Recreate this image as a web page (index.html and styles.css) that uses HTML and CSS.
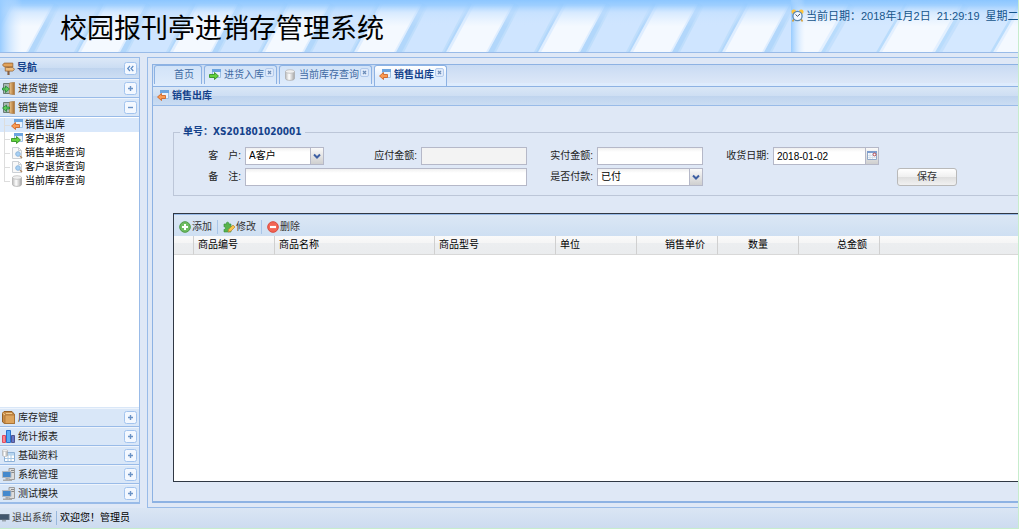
FILE: index.html
```html
<!DOCTYPE html>
<html lang="zh-CN">
<head>
<meta charset="utf-8">
<title>校园报刊亭进销存管理系统</title>
<link rel="stylesheet" href="styles.css">
</head>
<body>
<svg class="sprite" aria-hidden="true">
  <defs>
    <linearGradient id="g-top" x1="0" y1="0" x2="0" y2="1">
      <stop offset="0" stop-color="#8cc6ff" stop-opacity="1"/><stop offset=".1" stop-color="#98ccff" stop-opacity=".9"/>
      <stop offset=".24" stop-color="#c0deff" stop-opacity=".55"/><stop offset=".5" stop-color="#d0e6ff" stop-opacity="0"/>
    </linearGradient>
    <linearGradient id="g-left"><stop offset="0" stop-color="#98ccff"/><stop offset="1" stop-color="#d4e8ff" stop-opacity="0"/></linearGradient>
    <linearGradient id="g-wood"><stop offset="0" stop-color="#ecc58b"/><stop offset="1" stop-color="#a66b2c"/></linearGradient>
    <linearGradient id="g-db"><stop offset="0" stop-color="#bbb"/><stop offset=".4" stop-color="#fff"/><stop offset="1" stop-color="#a5a5a5"/></linearGradient>
    <pattern id="stripes" width="92" height="53" patternUnits="userSpaceOnUse" x="8">
      <rect width="92" height="53" fill="#cfe5ff"/>
      <path d="M4 4L-22 54M96 4L70 54M48 4L22 54" stroke="#bfdefc" stroke-width="9"/>
      <path d="M4 4L-22 54M96 4L70 54M48 4L22 54" stroke="#b2d7fb" stroke-width="5"/>
      <path d="M4 4H46L19 54H-23ZM96 4H138L111 54H69Z" fill="#dfeeff"/>
      <path d="M7 4H44L17 54H-20ZM99 4H136L109 54H72Z" fill="#f4f9ff"/>
    </pattern>
    <pattern id="stripes-wide" width="114" height="53" patternUnits="userSpaceOnUse">
      <rect width="114" height="53" fill="#d4e8ff"/>
      <path d="M60 4L31 54" stroke="#c4e0fd" stroke-width="9"/>
      <path d="M59 4L30 54M2 4L-27 54M116 4L87 54" stroke="#b9dcfc" stroke-width="5"/>
      <path d="M2 4H58L29 54H-27ZM116 4H172L143 54H87Z" fill="#e3f0ff"/>
      <path d="M5 4H55L26 54H-24ZM119 4H169L140 54H90Z" fill="#f4f9ff"/>
    </pattern>
  </defs>
  <symbol id="i-out" viewBox="0 0 12 12"><path d="M3.500.500h8v8h-8z" fill="#e8f2fc" stroke="#9dc0e6"/><path d="M3 0h9v3H3z" fill="#6da5df"/><path d="M.5 7L4.500 3.500v2h4v3h-4v2z" fill="#fb9b52" stroke="#cc5c1c" stroke-width=".8"/></symbol>
  <symbol id="i-in" viewBox="0 0 12 12"><path d="M3.500.500h8v8h-8z" fill="#e8f2fc" stroke="#9dc0e6"/><path d="M3 0h9v3H3z" fill="#6da5df"/><path d="M9.500 7L5.500 3.500v2H.5v3h5v2z" fill="#63d13c" stroke="#298a18" stroke-width=".8"/></symbol>
  <symbol id="i-find" viewBox="0 0 12 12"><path d="M1.500.500h6l3 3v8h-9z" fill="#f8f8f8" stroke="#ccd0d5"/><path d="M7.500.500v3h3" fill="none" stroke="#ccd0d5"/><circle cx="7" cy="7" r="2.300" fill="#a8d0f3" stroke="#8fb8de"/><path d="M9 9l2 2" stroke="#b28a65" stroke-width="1.500"/></symbol>
  <symbol id="i-db" viewBox="0 0 12 12"><path d="M1.500 2.500v7c0 2.500 9 2.500 9 0v-7z" fill="url(#g-db)" stroke="#aaa" stroke-width=".7"/><ellipse cx="6" cy="2.500" rx="4.500" ry="1.800" fill="#f0f0f0" stroke="#b5b5b5" stroke-width=".7"/></symbol>
  <symbol id="i-sign" viewBox="0 0 12 12"><path d="M5 1h2v11H5z" fill="#866043"/><path d="M2 1h8v3.500H2L.5 2.750z" fill="#e1a35c" stroke="#94602f" stroke-width=".7"/><path d="M3 5h7l1.500 1.700L10 8.400H3z" fill="#efbd7c" stroke="#94602f" stroke-width=".7"/></symbol>
  <symbol id="i-door" viewBox="0 0 13 13"><path d="M1.500 1.500h7v10h-7z" fill="#a9b8b3" stroke="#6b7c76"/><path d="M7.500 1l5-.8v12.600L7.500 12z" fill="url(#g-wood)" stroke="#a3743e" stroke-width=".6"/><path d="M.5 6h3V4l4 3-4 3.500V8h-3z" fill="#5dcc5a" stroke="#187e2d" stroke-width=".7"/></symbol>
  <symbol id="i-door-out" viewBox="0 0 13 13"><path d="M1.500 1.500h7v10h-7z" fill="#a9b8b3" stroke="#6b7c76"/><path d="M7.500 1l5-.8v12.600L7.500 12z" fill="url(#g-wood)" stroke="#a3743e" stroke-width=".6"/><path d="M7.500 6h-3V4l-4 3 4 3.500V8h3z" fill="#5dcc5a" stroke="#187e2d" stroke-width=".7"/></symbol>
  <symbol id="i-box" viewBox="0 0 13 13"><path d="M.5 2L2 .5h8l2.500 3v9h-10l-2-1.500z" fill="#c98e4b" stroke="#956026"/><path d="M3 4h9.500v8.500H3z" fill="#dda45d" stroke="#a36e31" stroke-width=".7"/><path d="M.5 2L3 4M4 2.500h6" fill="none" stroke="#f1ca8d"/></symbol>
  <symbol id="i-chart" viewBox="0 0 13 13"><path d="M.5 5.500h3v7h-3z" fill="#f88890" stroke="#de4c60"/><path d="M4.500.500h4v12h-4z" fill="#5aaaf4" stroke="#2870cf"/><path d="M9.500 5.500h3v7h-3z" fill="#6476c9" stroke="#52558f"/></symbol>
  <symbol id="i-table" viewBox="0 0 13 13"><path d="M2.500 3.500h10v9h-10z" fill="#fff" stroke="#8db1d7"/><path d="M3 4h9v2.500H3z" fill="#b5d4ef"/><path d="M3 9.500h9M6 6v6M9 6v6" stroke="#a9c8e4"/><path d="M.5 1.500v5c0 1.400 5 1.400 5 0v-5z" fill="url(#g-db)" stroke="#aaa" stroke-width=".5"/><ellipse cx="3" cy="1.500" rx="2.500" ry="1.100" fill="#eee" stroke="#bbb" stroke-width=".5"/></symbol>
  <symbol id="i-pc" viewBox="0 0 13 13"><path d="M7 .500h5.500v11H7z" fill="#ddd" stroke="#9c9c9c"/><path d="M9 2.500h3M9 4.500h3" stroke="#888"/><path d="M.5 3.500h8.500v6H.5z" fill="#4489cd" stroke="#b4b8be"/><path d="M3.500 10h3v1.500H10V13H1v-1.500h2.500z" fill="#aaa"/></symbol>
  <symbol id="i-clock" viewBox="0 0 13 13"><circle cx="2.800" cy="2.800" r="2.400" fill="#ffc43b"/><circle cx="10.200" cy="2.800" r="2.400" fill="#ffc43b"/><path d="M3 10l-1.500 2.500M10 10l1.500 2.500" stroke="#d6a03c" stroke-width="1.500"/><circle cx="6.500" cy="7" r="4.600" fill="#f2f8ff" stroke="#5a86af" stroke-width="1.300"/><path d="M4.500 5.500l2 1.800L9 5" fill="none" stroke="#456"/></symbol>
  <symbol id="i-add" viewBox="0 0 12 12"><circle cx="6" cy="6" r="5.300" fill="#6fbd62" stroke="#4d9a45"/><path d="M6 3v6M3 6h6" stroke="#fff" stroke-width="2"/></symbol>
  <symbol id="i-del" viewBox="0 0 12 12"><circle cx="6" cy="6" r="5.300" fill="#f36555" stroke="#d8493d"/><path d="M3 6h6" stroke="#fff" stroke-width="2.200"/></symbol>
  <symbol id="i-edit" viewBox="0 0 12 12"><path d="M1 3h2.500C2.500.500 6.500.500 5.800 3H8v2.500c2.500-1 2.500 3 0 2.200V11H1V8.300c2 .7 2-3 0-2.400z" fill="#59b34d" stroke="#338e35" stroke-width=".6"/><path d="M5 11l.8-2.800L10 4l2 2-4.200 4.200z" fill="#f8c64e" stroke="#b88434" stroke-width=".7"/></symbol>
  <symbol id="i-cal" viewBox="0 0 12 16"><path d="M1.500 3.500h9v8h-9z" fill="#f7fbff" stroke="#90a8c8"/><path d="M1 3h10v2H1z" fill="#7d9dce"/><path d="M2 7.500h5M2 9.500h8M4 5v6M6.500 5v6" stroke="#d3deea" stroke-width=".8"/><circle cx="8.500" cy="6.500" r="1.400" fill="#fff" stroke="#b04049"/></symbol>
  <symbol id="i-mon" viewBox="0 0 10 10"><path d="M0 1h9.500v6H0z" fill="#5a6b7d"/><path d="M0 2h8.500v4H0z" fill="#41566d"/><path d="M2 7h4v1.500H2z" fill="#9aa4ae"/></symbol>
  <symbol id="i-plus" viewBox="0 0 13 13"><rect x=".5" y=".5" width="12" height="12" rx="2" fill="#f3f8ff" stroke="#a3c4ee"/><path d="M6.500 4v5M4 6.500h5" stroke="#6b93c6" stroke-width="1.400"/></symbol>
  <symbol id="i-minus" viewBox="0 0 13 13"><rect x=".5" y=".5" width="12" height="12" rx="2" fill="#f3f8ff" stroke="#a3c4ee"/><path d="M4 6.500h5" stroke="#6b93c6" stroke-width="1.400"/></symbol>
  <symbol id="i-fold" viewBox="0 0 13 13"><rect x=".5" y=".5" width="12" height="12" rx="2" fill="#f3f8ff" stroke="#a3c4ee"/><path d="M6 4L3.700 6.500 6 9M9.300 4L7 6.500 9.300 9" fill="none" stroke="#5e8cc5" stroke-width="1.200"/></symbol>
  <symbol id="i-close" viewBox="0 0 9 9"><rect x=".5" y=".5" width="8" height="8" rx="1.500" fill="#dfeafa" stroke="#b2caec"/><path d="M3 3l3 3M6 3L3 6" stroke="#6c8cb8" stroke-width="1.300"/></symbol>
  <symbol id="i-arrow" viewBox="0 0 12 16"><path d="M3 6.500L6 9.500 9 6.500" fill="none" stroke="#3e5fa3" stroke-width="2"/></symbol>
</svg>

<div class="app">
  <header class="banner">
    <div class="brand">
      <svg class="banner-bg" aria-hidden="true"><rect width="100%" height="53" fill="url(#stripes)"/><rect width="100%" height="53" fill="url(#g-top)"/><rect width="22" height="53" fill="url(#g-left)"/></svg>
      <h1>校园报刊亭进销存管理系统</h1>
    </div>
    <div class="clock">
      <svg class="banner-bg" aria-hidden="true"><rect width="100%" height="53" fill="url(#stripes-wide)"/><rect width="100%" height="53" fill="url(#g-top)"/><rect width="14" height="53" fill="url(#g-left)"/></svg>
      <svg class="icon13"><use href="#i-clock"/></svg>
      <div class="now"><span>当前日期：2018年1月2日</span><span>21:29:19</span><span>星期二</span></div>
    </div>
  </header>

  <div class="body">
    <nav class="side" aria-label="导航">
      <div class="side-title"><svg class="icon13"><use href="#i-sign"/></svg><h2>导航</h2><button class="tool" aria-label="折叠"><svg class="icon13"><use href="#i-fold"/></svg></button></div>
      <button class="acc"><svg class="icon13"><use href="#i-door"/></svg><span>进货管理</span><svg class="tool"><use href="#i-plus"/></svg></button>
      <button class="acc"><svg class="icon13"><use href="#i-door-out"/></svg><span>销售管理</span><svg class="tool"><use href="#i-minus"/></svg></button>
      <ul class="tree">
        <li class="active"><a href="#"><svg class="icon12"><use href="#i-out"/></svg>销售出库</a></li>
        <li><a href="#"><svg class="icon12"><use href="#i-in"/></svg>客户退货</a></li>
        <li><a href="#"><svg class="icon12"><use href="#i-find"/></svg>销售单据查询</a></li>
        <li><a href="#"><svg class="icon12"><use href="#i-find"/></svg>客户退货查询</a></li>
        <li><a href="#"><svg class="icon12"><use href="#i-db"/></svg>当前库存查询</a></li>
      </ul>
      <button class="acc"><svg class="icon13"><use href="#i-box"/></svg><span>库存管理</span><svg class="tool"><use href="#i-plus"/></svg></button>
      <button class="acc"><svg class="icon13"><use href="#i-chart"/></svg><span>统计报表</span><svg class="tool"><use href="#i-plus"/></svg></button>
      <button class="acc"><svg class="icon13"><use href="#i-table"/></svg><span>基础资料</span><svg class="tool"><use href="#i-plus"/></svg></button>
      <button class="acc"><svg class="icon13"><use href="#i-pc"/></svg><span>系统管理</span><svg class="tool"><use href="#i-plus"/></svg></button>
      <button class="acc"><svg class="icon13"><use href="#i-pc"/></svg><span>测试模块</span><svg class="tool"><use href="#i-plus"/></svg></button>
    </nav>

    <main class="center">
      <div class="tabpanel">
        <div class="tabs">
          <button class="tab home">首页</button>
          <button class="tab"><svg class="icon12"><use href="#i-in"/></svg><span>进货入库</span><svg class="close"><use href="#i-close"/></svg></button>
          <button class="tab"><svg class="icon12"><use href="#i-db"/></svg><span>当前库存查询</span><svg class="close"><use href="#i-close"/></svg></button>
          <button class="tab on"><svg class="icon12"><use href="#i-out"/></svg><span>销售出库</span><svg class="close"><use href="#i-close"/></svg></button>
        </div>
        <div class="panel-title"><svg class="icon12"><use href="#i-out"/></svg><h2>销售出库</h2></div>
        <div class="content">
          <fieldset class="order">
            <legend>单号：XS201801020001</legend>
            <div class="fields">
              <label for="customer">客　户:</label>
              <span class="combo short"><select id="customer"><option>A客户</option></select><svg class="trigger"><use href="#i-arrow"/></svg></span>
              <label for="due">应付金额:</label>
              <input id="due" class="disabled" type="text" readonly>
              <label for="paid">实付金额:</label>
              <input id="paid" type="text">
              <label for="date">收货日期:</label>
              <span class="combo"><input id="date" type="text" value="2018-01-02"><svg class="trigger"><use href="#i-cal"/></svg></span>
              <label class="row2" for="note">备　注:</label>
              <input class="wide" id="note" type="text">
              <label for="ispaid">是否付款:</label>
              <span class="combo"><select id="ispaid"><option>已付</option></select><svg class="trigger"><use href="#i-arrow"/></svg></span>
              <button class="save" type="button">保存</button>
            </div>
          </fieldset>
          <section class="grid">
            <div class="toolbar">
              <button><svg class="icon12"><use href="#i-add"/></svg>添加</button>
              <button><svg class="icon12"><use href="#i-edit"/></svg>修改</button>
              <button><svg class="icon12"><use href="#i-del"/></svg>删除</button>
            </div>
            <table>
              <colgroup><col class="c-num"><col class="c-std"><col class="c-name"><col class="c-model"><col class="c-std"><col class="c-std"><col class="c-std"><col class="c-std"><col></colgroup>
              <thead><tr><th></th><th>商品编号</th><th>商品名称</th><th>商品型号</th><th>单位</th><th class="num">销售单价</th><th class="mid">数量</th><th class="num">总金额</th><th></th></tr></thead>
            </table>
          </section>
        </div>
      </div>
    </main>
  </div>

  <footer class="status"><button><svg class="icon10"><use href="#i-mon"/></svg>退出系统</button><span class="welcome">欢迎您！管理员</span></footer>
</div>
</body>
</html>
```
FILE: styles.css
```css
* { box-sizing: border-box; }
html { background: #c7edcc; }
body {
  margin: 0;
  font: 10px/14px "Liberation Sans", "Noto Sans CJK SC", sans-serif;
  color: #222;
}
button, input, select { font: inherit; color: inherit; margin: 0; padding: 0; border: 0; border-radius: 0; background: none; outline: 0; }
button { display: flex; align-items: center; cursor: pointer; white-space: nowrap; }
h1, h2 { margin: 0; }
svg { flex: none; display: block; }
.sprite { position: absolute; width: 0; height: 0; }
.icon13, .tool { width: 13px; height: 13px; }
.icon12 { width: 12px; height: 12px; }
.icon10 { width: 10px; height: 10px; }

.app { height: 100vh; min-height: 420px; display: flex; flex-direction: column; padding: 0 1px 1px 0; overflow: hidden; }

/* banner */
.banner { display: flex; flex: none; height: 53px; border-bottom: 1px solid #99bbe8; }
.banner-bg { position: absolute; inset: 0; width: 100%; height: 53px; z-index: -1; }
.brand, .clock { position: relative; z-index: 0; overflow: hidden; }
.brand { flex: 1; padding: 9px 0 0 60px; }
.brand h1 { font-size: 27px; line-height: 40px; font-weight: 400; color: #000; white-space: nowrap; }
.clock { width: 227px; display: flex; align-items: flex-start; padding-top: 9px; gap: 2px; color: #15558b; font-size: 11px; white-space: nowrap; }
.now { display: flex; gap: 6px; }

.body { flex: 1; min-height: 0; display: flex; gap: 7px; background: #dfe8f6; padding-top: 4px; }

/* navigation */
.side { width: 140px; flex: none; display: flex; flex-direction: column; margin-bottom: 4px; border: 1px solid #99bbe8; border-left: 0; background: #fff; }
.side-title { display: flex; align-items: center; height: 21px; padding: 0 2px; gap: 2px; border-bottom: 1px solid #99bbe8; background: linear-gradient(#dce8f7, #cbddf3 50%, #bfd4ee 51%, #cddef3); }
.side-title h2 { flex: 1; font-size: 10px; color: #15428b; }
.acc { flex: none; width: 100%; height: 19px; padding: 0 2px; gap: 3px; border-bottom: 1px solid #99bbe8; background: #d9e7f8; border-top: 1px solid #eef4fc; }
.acc span { flex: 1; text-align: left; }
.tree { flex: 1; min-height: 0; margin: 0; padding: 1px 0 0; list-style: none; border-bottom: 1px solid #d9e7f8; }
.tree li { padding-left: 11px; background: linear-gradient(#ddd, #ddd) 4px 0 / 1px 100% no-repeat, linear-gradient(#ddd, #ddd) 4px 7px / 6px 1px no-repeat; }
.tree li:last-child { background-size: 1px 7px, 6px 1px; }
.tree li.active { background-color: #d9e8fb; }
.tree a { display: flex; align-items: center; gap: 2px; color: #000; text-decoration: none; }

/* work area */
.center { flex: 1; min-width: 0; border: 1px solid #99bbe8; border-right: 0; padding: 6px 0 4px 4px; display: flex; }
.tabpanel { flex: 1; min-width: 0; display: flex; flex-direction: column; border: 1px solid #8db2e3; border-right: 0; border-bottom-width: 2px; }
.tabs { display: flex; gap: 2px; height: 22px; padding: 0 1px; background: linear-gradient(#c9dbf3, #dfe9f8); border-bottom: 1px solid #8db2e3; box-shadow: inset 0 -3px #deecfd; }
.tab { position: relative; height: 19px; padding: 0 12px 0 4px; gap: 3px; border: 1px solid #8db2e3; border-bottom: 0; border-radius: 3px 3px 0 0; background: linear-gradient(#d2e3f8, #deebfb); color: #416aa3; }
.tab.home { padding: 0 7px 0 19px; }
.tab.on { height: 21px; background: linear-gradient(#fff, #deecfd 60%); color: #15428b; font-weight: 700; padding-bottom: 2px; }
.close { position: absolute; top: 2px; right: 2px; width: 9px; height: 9px; }
.panel-title { display: flex; align-items: center; gap: 3px; height: 19px; padding-left: 4px; border-bottom: 1px solid #99bbe8; background: linear-gradient(#dae7f6, #cddef3 50%, #bfd4ee 51%, #cbddf3); }
.panel-title h2 { font-size: 10px; color: #15428b; }
.content { flex: 1; min-height: 0; display: flex; flex-direction: column; gap: 17px; padding: 19px 0 19px 20px; background: #dfe8f6; }

/* order form */
.order { flex: none; margin: 0; min-width: 0; padding: 8px 0 9px 1px; border: 1px solid #bcc6d8; border-right: 0; }
.order legend { margin-left: 5px; padding: 0 3px; color: #15428b; font: 700 10px/14px "DejaVu Sans Condensed", "Noto Sans CJK SC", sans-serif; }
.fields { display: grid; grid-template-columns: repeat(4, 70px 106px) 78px; grid-auto-rows: 18px; row-gap: 3px; align-items: stretch; }
.fields label { text-align: right; padding-right: 4px; line-height: 18px; }
.row2 { grid-column: 1; }
.wide { grid-column: 2 / span 3; }
.fields input, .fields select { width: 100%; height: 18px; min-width: 0; padding: 0 3px; border: 1px solid #b5b8c8; background: linear-gradient(#f0f0f0, #fff 4px); color: #000; }
.fields select { appearance: none; }
.fields .disabled { background: #f3f3f3; }
.combo { position: relative; display: block; }
.combo.short { width: 79px; }
.trigger { position: absolute; top: 1px; right: 1px; width: 13px; height: 16px; background: linear-gradient(#fafafa, #cfcfcf); border-left: 1px solid #b5b8c8; pointer-events: none; }
.save { grid-column: 9; width: 60px; margin-left: 18px; justify-content: center; border: 1px solid #b9b9b9; border-radius: 3px; background: linear-gradient(#fff, #f0f0f0 48%, #dfdfdf 52%, #f1f1f1); color: #333; }

/* item grid */
.grid { flex: 1; min-height: 0; border: 1px solid #303844; border-right: 0; background: #fff; overflow: hidden; }
.toolbar { display: flex; align-items: center; height: 22px; padding: 2px 5px 0; background: linear-gradient(#dbe7f5, #cedff2); border-top: 1px solid #99bbe8; }
.toolbar button { gap: 1px; color: #333; }
.toolbar button + button { margin-left: 5px; padding-left: 5px; border-left: 1px solid #a9c5e8; }
table { width: 100%; table-layout: fixed; border-collapse: separate; border-spacing: 0; }
.c-num { width: 20px; }
.c-std { width: 81px; }
.c-name { width: 160px; }
.c-model { width: 121px; }
th { height: 19px; padding: 0 4px; font-weight: 400; text-align: left; color: #000; border-right: 1px solid #d0d0d0; border-bottom: 1px solid #d8d8d8; background: linear-gradient(#fafafa, #f5f5f5 40%, #eceef0 41%, #eaecee); }
th:last-child { border-right: 0; }
th.num { text-align: right; padding-right: 12px; }
th.mid { text-align: center; }

.status { flex: none; display: flex; align-items: center; height: 20px; background: linear-gradient(#dae6f4, #cddcf0); color: #000; }
.status button { gap: 2px; color: #444; }
.welcome { margin-left: 4px; padding-left: 3px; border-left: 1px solid #98b8dd; }
```
